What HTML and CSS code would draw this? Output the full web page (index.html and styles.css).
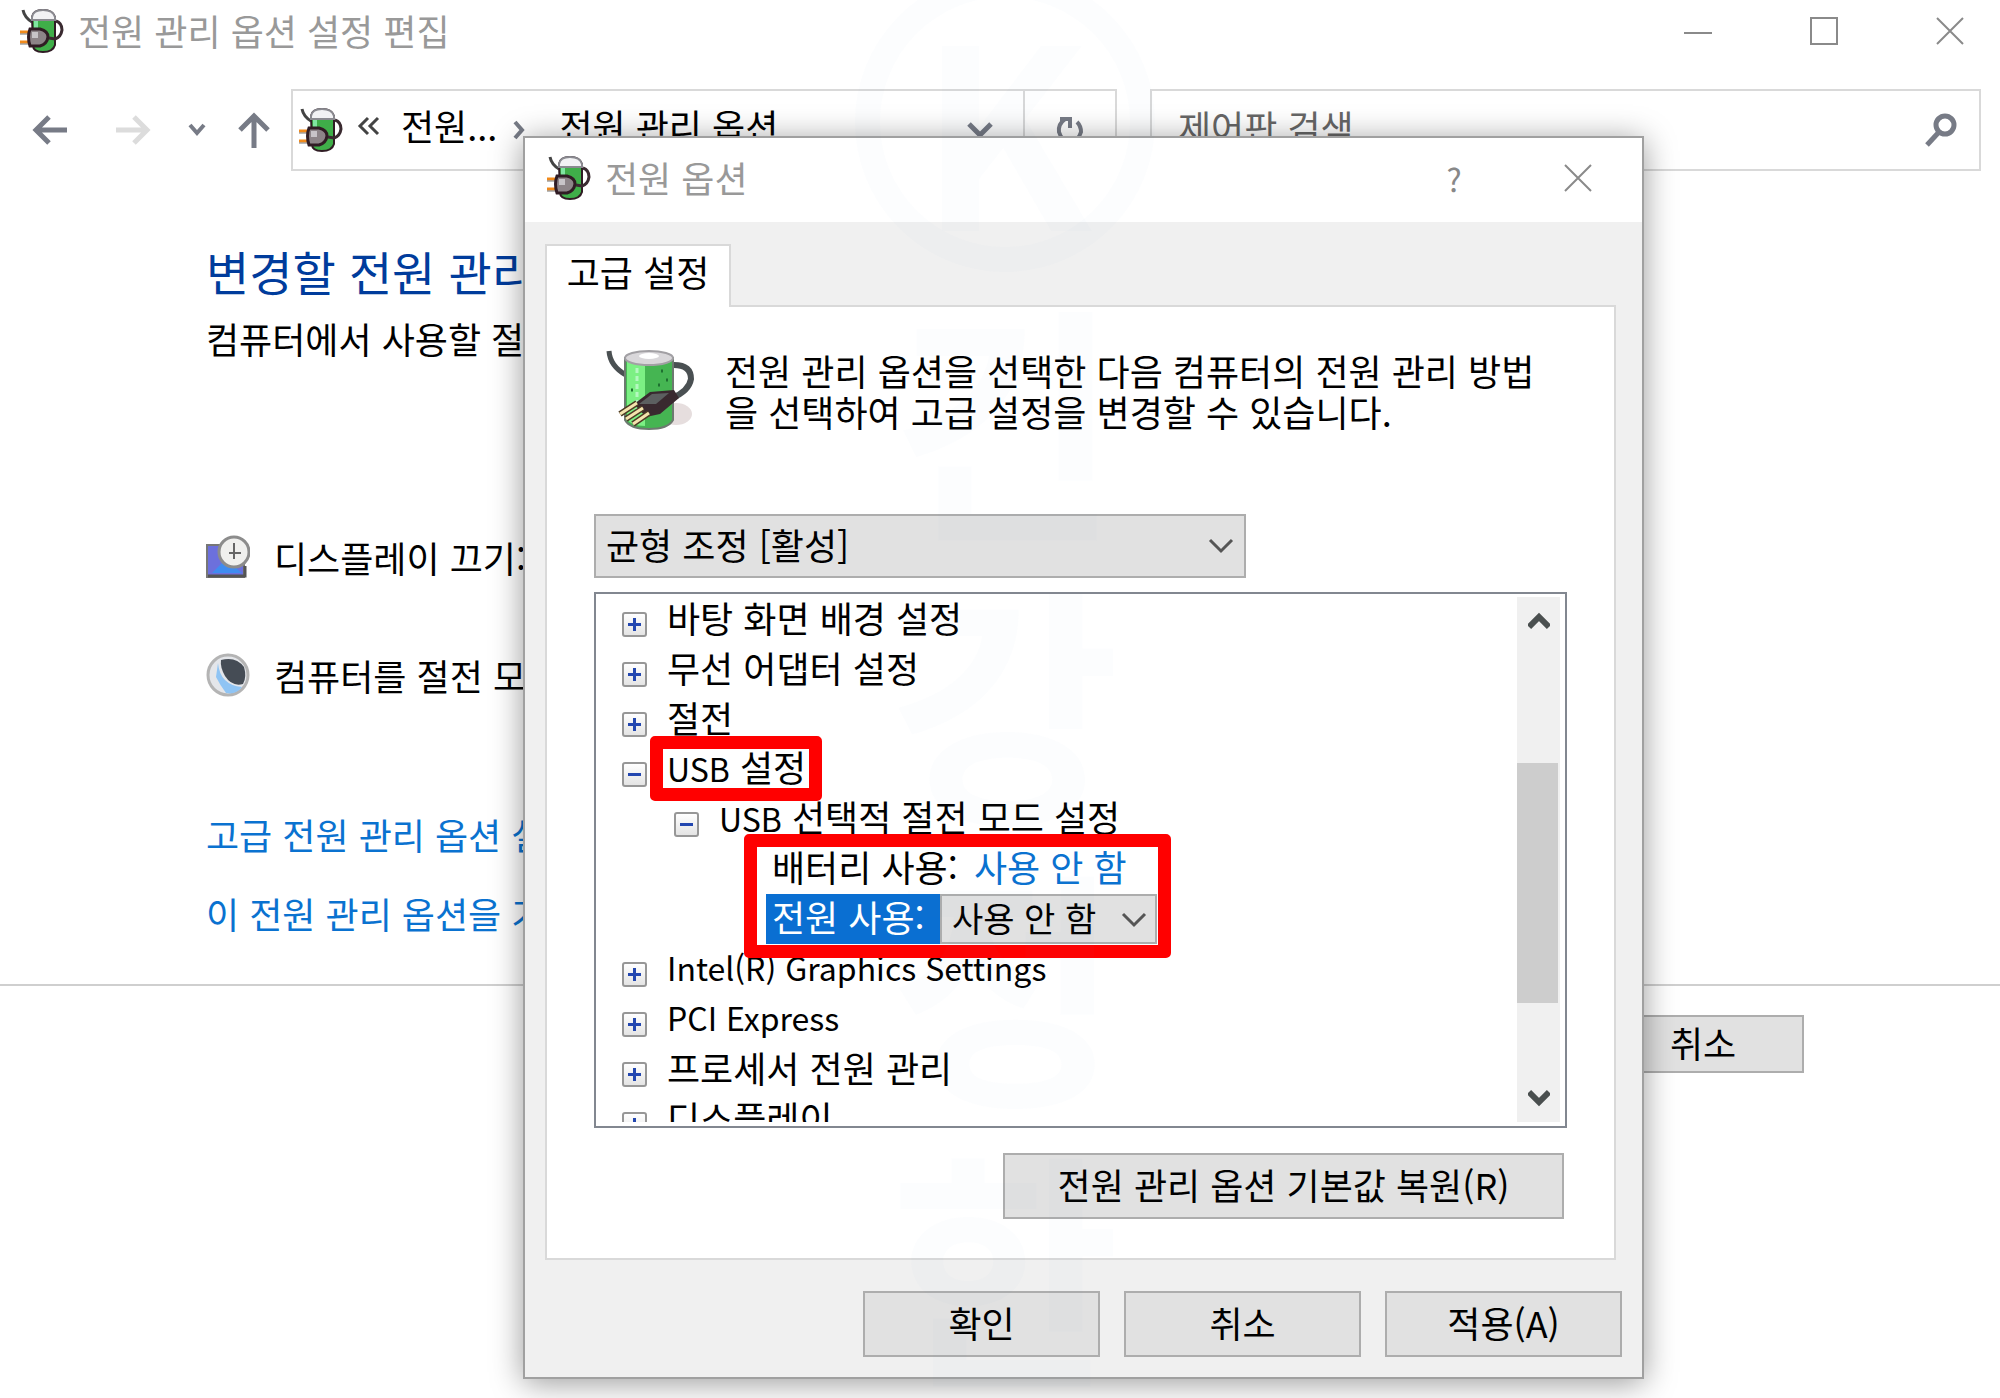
FILE: index.html
```html
<!DOCTYPE html>
<html lang="ko">
<head>
<meta charset="utf-8">
<title>전원 관리 옵션 설정 편집</title>
<link rel="stylesheet" href="styles.css">
</head>
<body>
<svg class="defs" aria-hidden="true">
  <defs>
    <symbol id="battery" viewBox="0 0 44 44">
      <path d="M3 1C4 6 7 10 12 13" fill="none" stroke="#444" stroke-width="3"/>
      <path d="M12 8Q13 1 23 1T35 8V36Q33 43 23 43T13 36Z" fill="#3fae49" stroke="#301c24" stroke-width="2"/>
      <path d="M12 11V8Q13 1 23 1T35 8V11Z" fill="#f2f2f4" stroke="#8a8a90" stroke-width="2"/>
      <path d="M14 12H18V22H14Z" fill="#7fe6a0"/>
      <path d="M36 12Q42 14 42 21Q41 28 35 30L29 29" fill="none" stroke="#3a2a30" stroke-width="3"/>
      <path d="M0 23H9M0 33H9" stroke="#f08a1c" stroke-width="3"/>
      <path d="M0 25H9M0 35H9" stroke="#777" stroke-width="1"/>
      <path d="M10 20H20Q28 22 28 28Q27 35 20 37H10Q7 28 10 20Z" fill="#8d8488" stroke="#301c24" stroke-width="3"/>
      <path d="M12 23H18V29H12Z" fill="#c8c4c8"/>
    </symbol>
  </defs>
</svg>

<div class="window">
  <header class="titlebar">
    <svg class="app-icon"><use href="#battery"/></svg>
    <h1 class="window-title">전원 관리 옵션 설정 편집</h1>
    <div class="window-controls">
      <button type="button" aria-label="최소화"><svg viewBox="0 0 30 30"><path d="M1 17H29"/></svg></button>
      <button type="button" aria-label="최대화"><svg viewBox="0 0 30 30"><path d="M2 2H28V28H2Z"/></svg></button>
      <button type="button" aria-label="닫기"><svg viewBox="0 0 30 30"><path d="M2 2L28 28M28 2L2 28"/></svg></button>
    </div>
  </header>

  <nav class="toolbar">
    <button class="nav-btn" type="button" aria-label="뒤로"><svg viewBox="0 0 36 36"><path d="M35 18H4M17 5L4 18L17 31"/></svg></button>
    <button class="nav-btn nav-off" type="button" aria-label="앞으로"><svg viewBox="0 0 36 36"><path d="M1 18H32M19 5L32 18L19 31"/></svg></button>
    <button class="nav-btn nav-small" type="button" aria-label="최근 위치"><svg viewBox="0 0 18 18"><path d="M2 4L9 12L16 4"/></svg></button>
    <button class="nav-btn nav-up" type="button" aria-label="위로"><svg viewBox="0 0 36 36"><path d="M18 36V4M4 18L18 4L32 18"/></svg></button>
    <div class="address">
      <svg class="app-icon"><use href="#battery"/></svg>
      <svg class="crumb-back" viewBox="0 0 24 20"><path d="M11 2L3 10L11 18M21 2L13 10L21 18"/></svg>
      <a class="crumb" href="#power">전원...</a>
      <svg class="crumb-sep" viewBox="0 0 12 20"><path d="M2 2L9 10L2 18"/></svg>
      <a class="crumb" href="#options">전원 관리 옵션</a>
      <button class="address-drop" type="button" aria-label="이전 위치"><svg viewBox="0 0 26 16"><path d="M2 2L13 13L24 2"/></svg></button>
      <button class="refresh" type="button" aria-label="새로 고침"><svg viewBox="0 0 30 30"><path d="M10 4Q3 9 4 17Q7 27 15 27T26 17Q26 11 22 7"/><path d="M5 4H15V13"/></svg></button>
    </div>
    <div class="search">
      <input class="search-input" type="search" placeholder="제어판 검색" aria-label="제어판 검색">
      <svg viewBox="0 0 32 34"><circle cx="20" cy="12" r="9"/><path d="M14 19L2 32"/></svg>
    </div>
  </nav>

  <main class="content">
    <h2 class="heading">변경할 전원 관리</h2>
    <p class="lead">컴퓨터에서 사용할 절전</p>
    <div class="setting">
      <svg class="setting-icon" viewBox="0 0 44 44">
        <path d="M1 10H38V42H1Z" fill="#6c70dc" stroke="#777" stroke-width="2"/>
        <path d="M6 38L20 24L36 38Z" fill="#3f8cf0"/>
        <path d="M2 41H39V31" fill="none" stroke="#555" stroke-width="3"/>
        <circle cx="28" cy="17" r="15" fill="#f0f0ee" stroke="#8c8c8c" stroke-width="3"/>
        <path d="M28 8V24M23 18H35" stroke="#666" stroke-width="2"/>
      </svg>
      <span>디스플레이 끄기:</span>
    </div>
    <div class="setting">
      <svg class="setting-icon" viewBox="0 0 44 44">
        <circle cx="22" cy="22" r="20" fill="#e4e6ea" stroke="#b4b4b4" stroke-width="3"/>
        <path d="M12 10Q14 32 36 34Q30 42 20 40Q14 32 10 24Z" fill="#8fc4f4"/>
        <path d="M15 7Q30 3 38 14Q41 24 37 31Q26 34 19 23Q14 14 15 7Z" fill="#454c55"/>
      </svg>
      <span>컴퓨터를 절전 모드</span>
    </div>
    <ul class="links">
      <li><a href="#advanced">고급 전원 관리 옵션 설정</a></li>
      <li><a href="#restore">이 전원 관리 옵션을 기본</a></li>
    </ul>
  </main>
  <footer class="actions"><button class="btn btn-page" type="button">취소</button></footer>
</div>

<section class="dialog" role="dialog" aria-labelledby="dialog-title">
  <header class="dialog-bar">
    <svg class="app-icon"><use href="#battery"/></svg>
    <h2 class="window-title" id="dialog-title">전원 옵션</h2>
    <button class="help" type="button" aria-label="도움말">?</button>
    <button class="dialog-close" type="button" aria-label="닫기"><svg viewBox="0 0 30 30"><path d="M2 2L28 28M28 2L2 28"/></svg></button>
  </header>
  <div class="dialog-body">
    <div role="tablist"><button class="tab" role="tab" aria-selected="true" type="button">고급 설정</button></div>
    <div class="pane" role="tabpanel">
      <div class="intro">
        <svg class="intro-icon" viewBox="0 0 88 80">
          <ellipse cx="70" cy="64" rx="16" ry="11" fill="#e6dede"/>
          <path d="M3 1Q4 16 20 25" fill="none" stroke="#4a5052" stroke-width="5"/>
          <path d="M19 8V70Q24 79 43 79T67 70V8Z" fill="#45b552" stroke="#6d7a70" stroke-width="2"/>
          <path d="M21 10H39V76Q25 76 21 69Z" fill="#7cf084"/>
          <path d="M31 18V66" stroke="#b4f8c0" stroke-width="3" stroke-dasharray="5 3"/>
          <path d="M55 21h2M60 30h2M52 35h2M25 40h2" stroke="#1e7030" stroke-width="3"/>
          <ellipse cx="43" cy="8" rx="24" ry="7" fill="#d9d7da" stroke="#a2a0a4" stroke-width="2"/>
          <ellipse cx="43" cy="6" rx="10" ry="3" fill="#fff"/>
          <path d="M68 15Q85 15 85 29Q83 41 66 48" fill="none" stroke="#4a5052" stroke-width="6"/>
          <path d="M28 54L44 42L68 40L73 48L54 64L40 67Z" fill="#39292f"/>
          <path d="M33 54L46 44L63 43L50 54Z" fill="#5c5f60"/>
          <path d="M31 53L14 64M37 58L20 69M43 63L27 74" stroke="#4d3b25" stroke-width="6"/>
          <path d="M31 53L14 64M37 58L20 69M43 63L27 74" stroke="#f4e3ae" stroke-width="3"/>
        </svg>
        <p>전원 관리 옵션을 선택한 다음 컴퓨터의 전원 관리 방법<br>을 선택하여 고급 설정을 변경할 수 있습니다.</p>
      </div>
      <div class="combo plan">
        <select aria-label="전원 관리 옵션"><option>균형 조정 [활성]</option></select>
        <svg viewBox="0 0 26 16"><path d="M2 2L13 13L24 2"/></svg>
      </div>
      <div class="listbox">
        <ul class="tree">
          <li class="node"><button class="toggle" type="button" aria-label="펼치기"></button>바탕 화면 배경 설정</li>
          <li class="node"><button class="toggle" type="button" aria-label="펼치기"></button>무선 어댑터 설정</li>
          <li class="node"><button class="toggle" type="button" aria-label="펼치기"></button>절전</li>
          <li class="node"><button class="toggle open" type="button" aria-label="접기"></button><span class="marked"><span class="latin">USB</span> 설정</span></li>
          <li>
            <ul class="subtree">
              <li class="node"><button class="toggle open" type="button" aria-label="접기"></button><span><span class="latin">USB</span> 선택적 절전 모드 설정</span></li>
              <li>
                <ul class="values">
                  <li class="value"><span class="value-name">배터리 사용:</span><a href="#battery-mode">사용 안 함</a></li>
                  <li class="value">
                    <label class="value-name selected" for="ac-mode">전원 사용:</label>
                    <span class="combo inline-combo">
                      <select id="ac-mode"><option>사용 안 함</option></select>
                      <svg viewBox="0 0 26 16"><path d="M2 2L13 13L24 2"/></svg>
                    </span>
                  </li>
                </ul>
              </li>
            </ul>
          </li>
          <li class="node latin"><button class="toggle" type="button" aria-label="펼치기"></button>Intel(R) Graphics Settings</li>
          <li class="node latin"><button class="toggle" type="button" aria-label="펼치기"></button>PCI Express</li>
          <li class="node"><button class="toggle" type="button" aria-label="펼치기"></button>프로세서 전원 관리</li>
          <li class="node"><button class="toggle" type="button" aria-label="펼치기"></button>디스플레이</li>
        </ul>
        <div class="scrollbar">
          <button type="button" aria-label="위로 스크롤"><svg viewBox="0 0 22 18"><path d="M1 15L11 5L21 15"/></svg></button>
          <div class="track"><div class="thumb"></div></div>
          <button type="button" aria-label="아래로 스크롤"><svg viewBox="0 0 22 18"><path d="M1 3L11 13L21 3"/></svg></button>
        </div>
      </div>
      <div class="restore"><button class="btn btn-restore" type="button">전원 관리 옵션 기본값 복원(R)</button></div>
    </div>
    <div class="dialog-actions">
      <button class="btn" type="button">확인</button>
      <button class="btn" type="button">취소</button>
      <button class="btn" type="button">적용(A)</button>
    </div>
  </div>
</section>

<div class="watermark" aria-hidden="true">
  <span class="logo">K</span>
  <span>긴</span><span>강</span><span>정</span><span>한</span>
</div>
</body>
</html>
```

FILE: styles.css
```css
* { box-sizing: border-box; }

body {
  margin: 0;
  position: relative;
  min-height: 100vh;
  overflow: hidden;
  background: #fff;
  color: #000;
  font: 36px/50px "Noto Sans CJK KR", sans-serif;
  white-space: nowrap;
}

h1, h2, p, ul { margin: 0; padding: 0; font-weight: 400; }
ul { list-style: none; }
a { color: #0a72d0; text-decoration: none; }
svg { flex: none; fill: none; stroke: #777b86; stroke-width: 3; }
symbol, use { stroke: none; }
.defs { position: absolute; width: 0; height: 0; }

button, input, select { font: inherit; color: inherit; border-radius: 0; }
button {
  display: flex;
  align-items: center;
  justify-content: center;
  padding: 0;
  border: 0;
  background: none;
}

/* main window */
.titlebar { display: flex; align-items: center; height: 62px; padding-left: 20px; }
.app-icon { width: 44px; height: 44px; stroke: none; }
.window-title { flex: 1; padding: 0 0 2px 14px; color: #999; font-size: 36px; }
.window-controls { display: flex; }
.window-controls button { width: 126px; height: 62px; }
.window-controls button:last-child { margin-right: -13px; }
.window-controls svg, .dialog-close svg { width: 30px; height: 30px; stroke: #8a8a8a; stroke-width: 2; }

.toolbar { display: flex; align-items: center; height: 82px; margin-top: 27px; padding: 0 19px 0 32px; }
.nav-btn svg { width: 36px; height: 36px; stroke-width: 5; }
.nav-btn { margin-right: 47px; }
.nav-off svg { stroke: #dcdcdc; }
.nav-btn.nav-small svg { width: 18px; height: 18px; stroke-width: 4; }
.nav-small { margin-left: -10px; margin-right: 30px; }
.nav-up { margin-right: 19px; }
.address {
  display: flex;
  align-items: center;
  flex: 0 0 826px;
  height: 82px;
  padding-left: 6px;
  border: 2px solid #d9d9d9;
}
.crumb { color: #000; margin-top: -10px; }
.crumb-back { width: 24px; height: 20px; margin: -8px 20px 0 14px; stroke: #444; }
.crumb-sep { width: 12px; height: 20px; margin: 0 34px 0 16px; stroke-width: 4; }
.address-drop { margin-left: auto; padding: 0 30px; }
.address-drop svg { width: 26px; height: 16px; stroke-width: 5; }
.refresh { width: 92px; height: 78px; border-left: 2px solid #d9d9d9; }
.refresh svg { width: 30px; height: 30px; stroke-width: 4; }
.search {
  display: flex;
  align-items: center;
  flex: 1;
  height: 82px;
  margin-left: 33px;
  padding: 0 22px 0 26px;
  border: 2px solid #d9d9d9;
}
.search svg { width: 32px; height: 34px; stroke-width: 5; }
.search-input { flex: 1; min-width: 0; height: 70px; padding: 0 0 8px; border: 0; background: none; }
.search-input::placeholder { color: #666; opacity: 1; }

.content { height: 815px; padding: 70px 0 0 206px; border-bottom: 2px solid #cfcfcf; }
.heading { color: #003c9c; font-size: 47px; line-height: 60px; }
.lead { margin-top: 12px; }
.setting { display: flex; align-items: center; gap: 24px; height: 50px; }
.setting-icon { width: 44px; height: 44px; stroke: none; }
.lead + .setting { margin-top: 169px; }
.setting + .setting { margin-top: 68px; }
.links { display: grid; gap: 29px; margin-top: 109px; }
.actions { display: flex; justify-content: flex-end; padding: 29px 196px 0 0; }

.btn {
  width: 237px;
  height: 66px;
  padding-bottom: 4px;
  border: 2px solid #adadad;
  background: #e1e1e1;
}
.btn-page { width: 202px; height: 58px; }
.btn-restore { width: 561px; }

/* dialog window */
.dialog {
  position: absolute;
  top: 136px;
  left: 523px;
  width: 1121px;
  border: 2px solid #a0a0a0;
  background: #f0f0f0;
  box-shadow: 0 4px 30px rgba(0, 0, 0, 0.4);
}
.dialog-bar { display: flex; align-items: center; height: 84px; padding: 0 0 5px 22px; background: #fff; }
.help { width: 60px; color: #888; font-size: 32px; }
.dialog-close { width: 125px; margin: 0 2px 0 31px; height: 79px; }
.dialog-body { padding: 22px 26px 20px 20px; }
.tab {
  position: relative;
  height: 63px;
  width: 186px;
  margin-bottom: -2px;
  padding-bottom: 12px;
  border: 2px solid #d9d9d9;
  border-bottom: 0;
  background: #fff;
}
.pane { height: 955px; padding: 43px 47px 0; border: 2px solid #d9d9d9; background: #fff; }
.intro { display: flex; gap: 31px; height: 164px; padding-left: 12px; line-height: 41px; }
.intro-icon { width: 88px; height: 80px; stroke: none; }

.combo { display: grid; grid-template-columns: 1fr; align-items: center; background: #e1e1e1; border: 2px solid #adadad; }
.combo > * { grid-area: 1 / 1; }
.combo select { width: 100%; height: 100%; padding: 0 40px 4px 10px; border: 0; background: none; appearance: none; }
.combo svg { justify-self: end; width: 26px; height: 16px; margin-right: 10px; stroke: #555; }
.plan { width: 652px; height: 64px; }

.listbox { display: flex; height: 536px; margin-top: 14px; padding: 3px 5px 4px 0; border: 2px solid #828790; }
.tree { flex: 1; overflow: hidden; margin-top: -3px; padding-left: 26px; }
.node { display: flex; align-items: center; height: 50px; padding-bottom: 4px; }
.latin { font-size: 32px; }
.toggle {
  width: 25px;
  height: 25px;
  margin: 14px 20px 0 0;
  border: 2px solid #979797;
  border-radius: 3px;
  background:
    linear-gradient(#2347b0, #2347b0) center / 13px 3px no-repeat,
    linear-gradient(#2347b0, #2347b0) center / 3px 13px no-repeat,
    linear-gradient(#fff, #e4e4e4);
}
.toggle.open { background: linear-gradient(#2347b0, #2347b0) center / 13px 3px no-repeat, linear-gradient(#fff, #e4e4e4); }
.subtree { padding-left: 52px; }
.values { position: relative; width: 391px; margin-left: 92px; }
.value { display: flex; height: 50px; line-height: 44px; }
.value-name { width: 174px; padding-left: 6px; }
.value a { margin-left: 34px; }
.selected { background: #0a6fd2; color: #fff; }
.inline-combo { flex: 1; }
.inline-combo select { font-size: 34px; }
.inline-combo svg { margin-right: 8px; }

/* red call-outs drawn over the tree */
.marked { position: relative; }
.marked::after, .values::after {
  content: "";
  position: absolute;
  border: 13px solid #f00;
  border-radius: 5px;
}
.marked::after { inset: -5px -16px -8px -17px; }
.values::after { inset: -10px -14px -14px -22px; }

.scrollbar { display: flex; flex-direction: column; width: 43px; background: #f0f0f0; }
.scrollbar button { width: 43px; height: 48px; }
.scrollbar svg { width: 22px; height: 18px; stroke: #4a4f4f; stroke-width: 6; }
.track { flex: 1; padding-top: 118px; }
.thumb { width: 41px; height: 240px; background: #cdcdcd; }

.restore { display: flex; justify-content: flex-end; padding: 25px 3px 0 0; }
.dialog-actions { display: flex; justify-content: flex-end; gap: 24px; padding: 31px 0 0; margin-right: -6px; }

/* faint vertical watermark over both windows */
.watermark {
  position: absolute;
  top: -28px;
  left: 855px;
  width: 300px;
  display: flex;
  flex-direction: column;
  align-items: center;
  color: rgba(90, 150, 200, 0.02);
  font-size: 250px;
  font-weight: 700;
  line-height: 282px;
  pointer-events: none;
}
.logo {
  width: 300px;
  height: 300px;
  border: 25px solid;
  border-radius: 50%;
  text-align: center;
  line-height: 250px;
}
```
